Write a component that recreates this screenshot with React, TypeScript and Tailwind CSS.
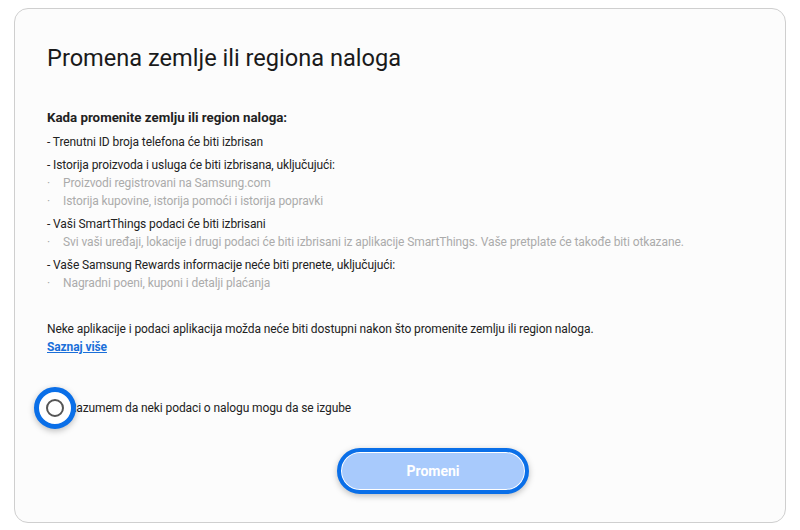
export default function App() {
  const font = { fontFamily: 'Roboto, "Noto Sans", sans-serif' };
  return (
    <div className="h-[530px] w-[800px] bg-white pl-[14px] pr-[14px] pt-[8px] pb-[7px]" style={font}>
      <div className="flex h-full flex-col rounded-[14px] border border-[#cfcfcf] bg-[#fcfcfc] pl-[32px] pr-6 pt-[33px]">
        <h1 className="text-[23.6px] leading-[32px] text-[#1a1a1a]">Promena zemlje ili regiona naloga</h1>

        <div className="mt-[34px] text-[12px] leading-[18px] tracking-[-0.1px] text-[#222]">
          <p className="text-[13.3px] font-bold leading-[20px] tracking-normal">Kada promenite zemlju ili region naloga:</p>
          <p className="mt-[5px]">- Trenutni ID broja telefona će biti izbrisan</p>

          <p className="mt-[5px]">- Istorija proizvoda i usluga će biti izbrisana, uključujući:</p>
          <ul className="text-[#ababab]">
            <li className="flex"><span className="w-[16px]">·</span>Proizvodi registrovani na Samsung.com</li>
            <li className="flex"><span className="w-[16px]">·</span>Istorija kupovine, istorija pomoći i istorija popravki</li>
          </ul>

          <p className="mt-[5px]">- Vaši SmartThings podaci će biti izbrisani</p>
          <ul className="text-[#ababab]">
            <li className="flex"><span className="w-[16px]">·</span>Svi vaši uređaji, lokacije i drugi podaci će biti izbrisani iz aplikacije SmartThings. Vaše pretplate će takođe biti otkazane.</li>
          </ul>

          <p className="mt-[5px]">- Vaše Samsung Rewards informacije neće biti prenete, uključujući:</p>
          <ul className="text-[#ababab]">
            <li className="flex"><span className="w-[16px]">·</span>Nagradni poeni, kuponi i detalji plaćanja</li>
          </ul>

          <p className="mt-[28px]">Neke aplikacije i podaci aplikacija možda neće biti dostupni nakon što promenite zemlju ili region naloga.</p>
          <a href="#" className="font-bold text-[#1a6fd9] underline">Saznaj više</a>
        </div>

        <label className="mt-[31px] -ml-[13px] flex items-center text-[12px] tracking-[-0.1px] text-[#222]">
          <span className="relative z-10 flex h-[42px] w-[42px] shrink-0 items-center justify-center rounded-full border-[5px] border-[#0a6fe8] bg-white shadow-[0_2px_6px_rgba(0,0,0,0.25)]">
            <span className="h-[18px] w-[18px] rounded-full border-2 border-[#555]" />
          </span>
          <span className="-ml-[7px]">Razumem da neki podaci o nalogu mogu da se izgube</span>
        </label>

        <div className="mt-[19px] flex justify-center pl-[58px]">
          <button className="h-[46px] w-[192px] rounded-full border-[4px] border-[#0a6fe8] bg-[#a8cafc] text-[14px] font-bold text-white shadow-[inset_0_0_0_1px_#ffffff,0_2px_6px_rgba(0,0,0,0.25)]">
            Promeni
          </button>
        </div>
      </div>
    </div>
  );
}
